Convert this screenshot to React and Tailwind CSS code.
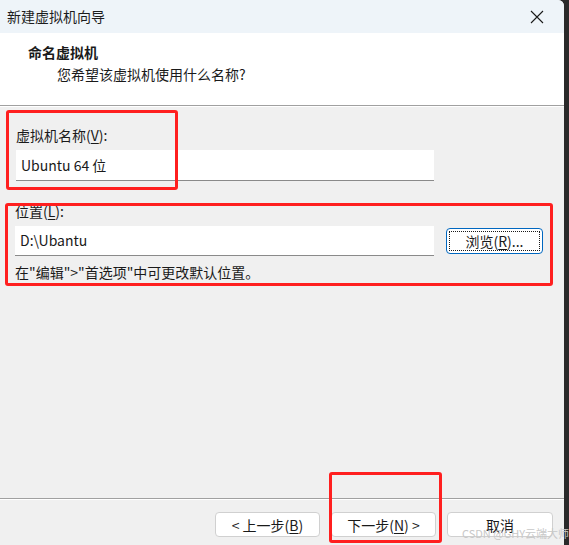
import React from 'react';

const font = { fontFamily: '"Noto Sans CJK SC", "Noto Sans", sans-serif' };

const U = ({ children }) => <span className="underline underline-offset-2">{children}</span>;

const WizButton = ({ children, className = '' }) => (
  <button
    className={`h-[25px] rounded-[4px] border border-[#d0d0d0] bg-white text-[14px] leading-none text-[#1a1a1a] ${className}`}
  >
    {children}
  </button>
);

const App = () => {
  return (
    <div className="flex h-[545px] w-[569px] overflow-hidden bg-[#2a2a2a] text-[14px] text-[#1a1a1a]" style={font}>
      <div className="relative flex h-full w-[564px] shrink-0 flex-col rounded-tr-[6px] bg-[#f0f0f0]">
        {/* title bar */}
        <div className="flex h-[33px] items-center justify-between rounded-tr-[6px] bg-[#eef4f9] pl-[7px] pr-[20px]">
          <span className="text-[14px] text-[#1c1c1c]">新建虚拟机向导</span>
          <svg width="14" height="14" viewBox="0 0 14 14" fill="none" stroke="#1a1a1a" strokeWidth="1.1">
            <path d="M1 1L13 13M13 1L1 13" />
          </svg>
        </div>

        {/* header */}
        <div className="h-[73px] border-b border-[#a0a0a0] bg-white pl-[28px] pt-[8px]">
          <div className="text-[14px] font-bold leading-[22px]">命名虚拟机</div>
          <div className="pl-[29px] text-[14px] leading-[22px]">您希望该虚拟机使用什么名称?</div>
        </div>
        <div className="h-px bg-white" />

        {/* body */}
        <div className="flex-1 pl-[16px] pt-[18px]">
          <div className="leading-[20px]">
            虚拟机名称(<U>V</U>):
          </div>
          <div className="mt-[5px] flex h-[31px] w-[418px] items-center border-b border-[#8a8a8a] bg-white pl-[5px] text-[#1a1a1a]">
            Ubuntu 64 位
          </div>

          <div className="mt-[20px] -ml-px leading-[20px]">
            位置(<U>L</U>):
          </div>
          <div className="-ml-px mt-[5px] flex items-center">
            <div className="flex h-[30px] w-[419px] shrink-0 items-center border-b border-[#8a8a8a] bg-white pl-[5px]">
              D:\Ubantu
            </div>
            <button className="ml-[12px] flex h-[26px] w-[97px] shrink-0 items-center justify-center rounded-[4px] border border-[#0067c0] bg-white p-[2px]">
              <span className="flex h-full w-full items-center justify-center border border-dotted border-[#1a1a1a] leading-none">
                浏览(<U>R</U>)...
              </span>
            </button>
          </div>
          <div className="-ml-px mt-[6px] leading-[20px]">在"编辑"&gt;"首选项"中可更改默认位置。</div>
        </div>

        {/* footer */}
        <div className="h-[47px] border-t border-[#a0a0a0]">
          <div className="h-px bg-white" />
          <div className="flex justify-end gap-[11px] pr-[11px] pt-[12px]">
            <WizButton className="w-[105px]">
              &lt; 上一步(<U>B</U>)
            </WizButton>
            <WizButton className="w-[105px]">
              下一步(<U>N</U>) &gt;
            </WizButton>
            <WizButton className="w-[106px]">取消</WizButton>
          </div>
        </div>

        {/* annotation overlays */}
        <div className="pointer-events-none absolute left-[6px] top-[110px] h-[80px] w-[172px] rounded-[3px] border-[3px] border-[#ff1f1f]" />
        <div className="pointer-events-none absolute left-[5px] top-[203px] h-[83px] w-[548px] rounded-[3px] border-[3px] border-[#ff1f1f]" />
        <div className="pointer-events-none absolute left-[329px] top-[472px] h-[71px] w-[113px] rounded-[3px] border-[3px] border-[#ff1f1f]" />
        <div className="pointer-events-none absolute left-[462px] top-[528px] whitespace-nowrap text-[11px] leading-none text-[#c8c8c8]">
          CSDN @GHY云端大师
        </div>
      </div>
      <div className="flex-1" />
    </div>
  );
};

export default App;
